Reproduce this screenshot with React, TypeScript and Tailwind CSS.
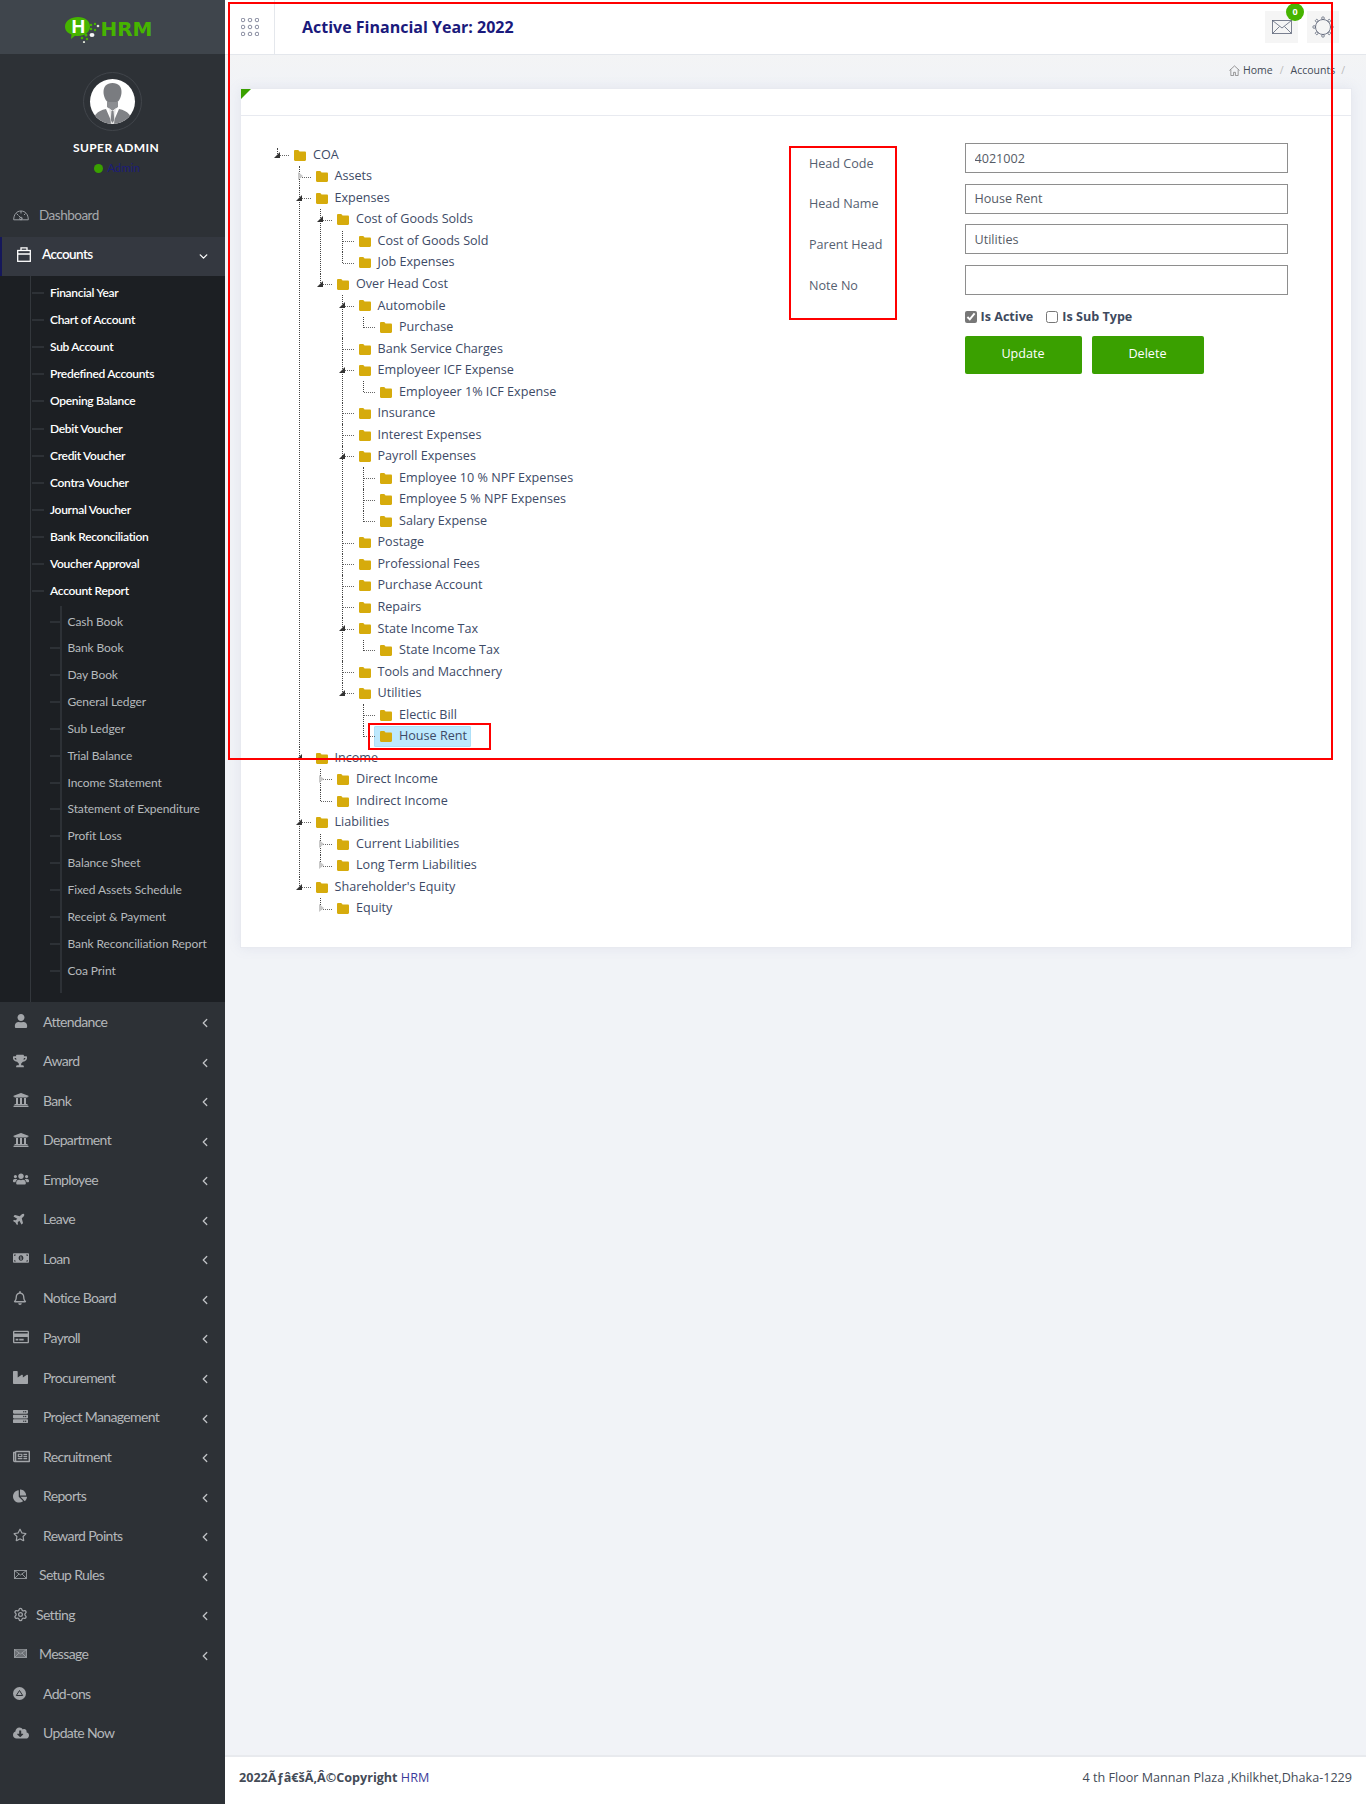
import type { ReactNode } from "react";
import { ChevronDown, ChevronLeft, Settings } from "lucide-react";
import {
  FaUser,
  FaTrophy,
  FaUniversity,
  FaUsers,
  FaPlane,
  FaMoneyBillAlt,
  FaRegBell,
  FaRegCreditCard,
  FaIndustry,
  FaServer,
  FaRegNewspaper,
  FaChartPie,
  FaRegStar,
  FaCloudDownloadAlt,
} from "react-icons/fa";

interface TreeNode {
  label: string;
  mark?: "open" | "closed";
  selected?: boolean;
  children?: TreeNode[];
}

const tree: TreeNode = {
  label: "COA",
  mark: "open",
  children: [
    { label: "Assets", mark: "closed" },
    {
      label: "Expenses",
      mark: "open",
      children: [
        {
          label: "Cost of Goods Solds",
          mark: "open",
          children: [{ label: "Cost of Goods Sold" }, { label: "Job Expenses" }],
        },
        {
          label: "Over Head Cost",
          mark: "open",
          children: [
            { label: "Automobile", mark: "open", children: [{ label: "Purchase" }] },
            { label: "Bank Service Charges" },
            { label: "Employeer ICF Expense", mark: "open", children: [{ label: "Employeer 1% ICF Expense" }] },
            { label: "Insurance" },
            { label: "Interest Expenses" },
            {
              label: "Payroll Expenses",
              mark: "open",
              children: [
                { label: "Employee 10 % NPF Expenses" },
                { label: "Employee 5 % NPF Expenses" },
                { label: "Salary Expense" },
              ],
            },
            { label: "Postage" },
            { label: "Professional Fees" },
            { label: "Purchase Account" },
            { label: "Repairs" },
            { label: "State Income Tax", mark: "open", children: [{ label: "State Income Tax" }] },
            { label: "Tools and Macchnery" },
            {
              label: "Utilities",
              mark: "open",
              children: [{ label: "Electic Bill" }, { label: "House Rent", selected: true }],
            },
          ],
        },
      ],
    },
    {
      label: "Income",
      mark: "open",
      children: [{ label: "Direct Income", mark: "closed" }, { label: "Indirect Income" }],
    },
    {
      label: "Liabilities",
      mark: "open",
      children: [
        { label: "Current Liabilities", mark: "closed" },
        { label: "Long Term Liabilities", mark: "closed" },
      ],
    },
    {
      label: "Shareholder's Equity",
      mark: "open",
      children: [{ label: "Equity", mark: "closed" }],
    },
  ],
};

const accountLinks = [
  "Financial Year",
  "Chart of Account",
  "Sub Account",
  "Predefined Accounts",
  "Opening Balance",
  "Debit Voucher",
  "Credit Voucher",
  "Contra Voucher",
  "Journal Voucher",
  "Bank Reconciliation",
  "Voucher Approval",
  "Account Report",
];

const reportLinks = [
  "Cash Book",
  "Bank Book",
  "Day Book",
  "General Ledger",
  "Sub Ledger",
  "Trial Balance",
  "Income Statement",
  "Statement of Expenditure",
  "Profit Loss",
  "Balance Sheet",
  "Fixed Assets Schedule",
  "Receipt & Payment",
  "Bank Reconciliation Report",
  "Coa Print",
];

function Folder() {
  return (
    <svg viewBox="0 0 12 11" className="h-[11px] w-[12px] shrink-0" fill="#d6ab0c">
      <path d="M0 1.2C0 .5.5 0 1.2 0h2.6c.5 0 .8.2 1.1.6l.6.9h5.3c.7 0 1.2.5 1.2 1.2v7.1c0 .7-.5 1.2-1.2 1.2H1.2C.5 11 0 10.500 0 9.800z" />
    </svg>
  );
}

function TreeRow({ node, last, root }: { node: TreeNode; last: boolean; root?: boolean }) {
  return (
    <li className="relative">
      <span
        className={`absolute left-[3px] border-l border-dotted border-[#444] ${
          root ? "top-[3px] h-[8px]" : last ? "top-0 h-[11px]" : "top-0 bottom-0"
        }`}
      />
      <div className="relative flex h-[21.54px] items-center pl-[20px]">
        <span className="absolute left-[4px] top-[10.500px] w-[11px] border-t border-dotted border-[#666]" />
        {node.mark === "open" && (
          <span className="absolute left-0 top-[7px] h-0 w-0 border-b-[6px] border-l-[6px] border-b-[#333] border-l-transparent" />
        )}
        {node.mark === "closed" && (
          <span className="absolute left-[2px] top-[6px] h-0 w-0 border-y-[4px] border-l-[5px] border-y-transparent border-l-[#c8c8c8]" />
        )}
        <span
          className={`flex h-[21px] items-center gap-[7px] rounded-[1px] whitespace-nowrap ${
            node.selected ? "-ml-[6px] border border-[#aee0f8] bg-[#bee9fd] pl-[5px] pr-[3px]" : ""
          }`}
        >
          <Folder />
          {node.label}
        </span>
      </div>
      {node.children && (
        <ul className="pl-[21.500px]">
          {node.children.map((child, i) => (
            <TreeRow key={child.label + i} node={child} last={i === node.children!.length - 1} />
          ))}
        </ul>
      )}
    </li>
  );
}

function Logo() {
  return (
    <div className="relative flex items-center">
      <svg viewBox="0 0 36 27" className="h-[27px] w-[36px]">
        <path d="M14 1c7 0 12 4 12 9.500S21 20 14 20c-1 0-2 0-3-.200L7 23l.5-4.500C3 17 1 14 1 10.500 1 5 7 1 14 1z" fill="#46b400" />
        <circle cx="27" cy="9" r="1.300" fill="#46b400" />
        <circle cx="31" cy="8" r="1.200" fill="#46b400" />
        <circle cx="34" cy="10" r="1.300" fill="#dfe6d8" />
        <circle cx="27" cy="13" r="1.300" fill="#46b400" />
        <circle cx="31" cy="14" r="1.200" fill="#46b400" />
        <ellipse cx="28" cy="19" rx="2.500" ry="2" fill="#f5f5f5" />
        <circle cx="22" cy="19" r="1.500" fill="#46b400" />
        <circle cx="18" cy="22" r="1.300" fill="#46b400" />
        <circle cx="23" cy="23" r="1.200" fill="#46b400" />
        <circle cx="20" cy="26" r="1.100" fill="#dfe6d8" />
      </svg>
      <span className="absolute left-[7px] top-[0px] font-['Liberation_Sans',sans-serif] text-[19px] font-bold leading-[21px] text-white">
        H
      </span>
      <span className="font-['DejaVu_Sans',sans-serif] text-[20px] font-bold leading-none text-[#46b400]">HRM</span>
    </div>
  );
}

function Avatar() {
  return (
    <div className="flex h-[59px] w-[59px] items-center justify-center rounded-full border border-[#41454b]">
      <svg viewBox="0 0 45 45" className="h-[45px] w-[45px] rounded-full bg-white">
        <path d="M22.500 4c6 0 9 3.500 9 9 0 5-3 12-9 12s-9-7-9-12c0-5.500 3-9 9-9z" fill="#7a7c80" />
        <path d="M17 23h11v5l-5.500 4L17 28z" fill="#8c8e92" />
        <path d="M3 45c0-9 4-13 13-15l6.500 15L29 30c9 2 13 6 13 15z" fill="#808286" />
        <path d="M19 29l3.500 3 3.500-3-2 16h-3z" fill="#e6e6e6" />
        <path d="M21.500 32h2l.8 9-1.800 3-1.800-3z" fill="#808286" />
      </svg>
    </div>
  );
}

function GaugeIcon() {
  return (
    <svg viewBox="0 0 16 11" className="h-[11px] w-[16px]" fill="none" stroke="#9a9ea3" strokeWidth="1">
      <path d="M.7 9.800C.7 4.500 3.600 1 8 1s7.300 3.500 7.300 8.800H.7z" />
      <path d="M8 1v2.500M3.500 3.500l1.500 1.500M12.500 3.500 11 5M8.800 8.800 5.500 5.500" />
      <circle cx="8" cy="8.500" r="1.300" />
    </svg>
  );
}

function BagIcon() {
  return (
    <svg viewBox="0 0 14 15" className="h-[15px] w-[14px]" fill="none" stroke="#fff" strokeWidth="1.300">
      <rect x=".7" y="3.500" width="12.600" height="10.800" />
      <path d="M4 3.500V.8h6v2.700M.7 7h12.600" />
    </svg>
  );
}

function ThinMail({ fill }: { fill?: string }) {
  return (
    <svg viewBox="0 0 13 9" className="ml-[1px] h-[9px] w-[13px]" fill={fill ?? "none"} stroke="#9a9ea3" strokeWidth=".9">
      <rect x=".5" y=".5" width="12" height="8" />
      <path d="m.5.5 6 4.500 6-4.500M.5 8.500 5 4M12.500 8.500 8 4" />
    </svg>
  );
}

function AddonIcon() {
  return (
    <svg viewBox="0 0 13 13" className="h-[13px] w-[13px]">
      <circle cx="6.500" cy="6.500" r="6.500" fill="#a2a5a9" />
      <path d="M6.500 3.500 9.700 8.500H3.300z" fill="none" stroke="#2d3136" strokeWidth="1" />
    </svg>
  );
}

function SideItem({
  icon,
  label,
  textLeft = 43,
  chevron = true,
}: {
  icon: ReactNode;
  label: string;
  textLeft?: 43 | 39 | 36;
  chevron?: boolean;
}) {
  const gap = textLeft === 43 ? "w-[30px]" : textLeft === 39 ? "w-[26px]" : "w-[23px]";
  return (
    <div className="flex h-[39.55px] items-center pb-[2px] pl-[13px] pr-[13px] text-[14px] text-[#b4b7ba]">
      <span className={`flex shrink-0 items-center text-[#a2a5a9] ${gap}`}>{icon}</span>
      <span className="flex-1 tracking-[-0.65px]">{label}</span>
      {chevron && <ChevronLeft size={14} strokeWidth={2.2} className="mt-[4px] text-[#c0c3c6]" />}
    </div>
  );
}

function Sidebar() {
  return (
    <aside className="flex w-[225px] shrink-0 flex-col bg-[#2d3136] font-['Lato',sans-serif]">
      <div className="flex h-[54px] items-center justify-center bg-[#3f454c] pr-[8px] pt-[4px]">
        <Logo />
      </div>
      <div className="flex h-[142px] flex-col items-center pt-[18px]">
        <Avatar />
        <div className="mt-[9px] pl-[7px] text-[12px] font-bold leading-[16px] tracking-[0.4px] text-white">SUPER ADMIN</div>
        <div className="mt-[4px] flex items-center gap-[4px] pl-[9px] text-[11.500px] leading-[16px] text-[#1c1c78]">
          <span className="h-[9px] w-[9px] rounded-full bg-[#3aa000]" />
          Admin
        </div>
      </div>
      <div className="flex h-[41px] items-center pb-[3px] pl-[13px] text-[13.500px] tracking-[-0.5px] text-[#a5a8ac]">
        <span className="w-[26px]">
          <GaugeIcon />
        </span>
        Dashboard
      </div>
      <div className="flex h-[39px] items-center border-l-2 border-[#15175a] bg-[#343840] pb-[4px] pl-[15px] pr-[15px] text-[13.500px] font-semibold tracking-[-0.6px] text-white">
        <span className="w-[25px]">
          <BagIcon />
        </span>
        <span className="flex-1">Accounts</span>
        <ChevronDown size={13} strokeWidth={2.4} className="mt-[4px]" />
      </div>
      <div className="bg-[#1c1f23] pl-[30px]">
        <div className="border-l border-[#33373c] pb-[9px] pt-[3.500px]">
          {accountLinks.map((link) => (
            <div key={link} className="flex h-[27.100px] items-center text-[12px] font-semibold tracking-[-0.3px] text-white">
              <span className="ml-[1px] mr-[6px] w-[12px] border-t-2 border-[#2d3136]" />
              {link}
            </div>
          ))}
          <div className="ml-[29px] mt-[1px] border-l-2 border-[#2d3136] pb-[9.400px] pt-[2.500px]">
            {reportLinks.map((link) => (
              <div key={link} className="-ml-[12px] flex h-[26.850px] items-center text-[12px] tracking-[-0.1px] text-[#b6babd]">
                <span className="mr-[5.500px] w-[12px] border-t-2 border-[#2d3136]" />
                {link}
              </div>
            ))}
          </div>
        </div>
      </div>
      <div>
        <SideItem icon={<FaUser size={14} className="ml-[1px]" />} label="Attendance" />
        <SideItem icon={<FaTrophy size={14} />} label="Award" />
        <SideItem icon={<FaUniversity size={16} />} label="Bank" />
        <SideItem icon={<FaUniversity size={16} />} label="Department" />
        <SideItem icon={<FaUsers size={16} />} label="Employee" />
        <SideItem icon={<FaPlane size={13} className="-rotate-45" />} label="Leave" />
        <SideItem icon={<FaMoneyBillAlt size={16} />} label="Loan" />
        <SideItem icon={<FaRegBell size={14} />} label="Notice Board" />
        <SideItem icon={<FaRegCreditCard size={16} />} label="Payroll" />
        <SideItem icon={<FaIndustry size={15} />} label="Procurement" />
        <SideItem icon={<FaServer size={15} />} label="Project Management" />
        <SideItem icon={<FaRegNewspaper size={17} />} label="Recruitment" />
        <SideItem icon={<FaChartPie size={14} />} label="Reports" />
        <SideItem icon={<FaRegStar size={14} />} label="Reward Points" />
        <SideItem icon={<ThinMail />} label="Setup Rules" textLeft={39} />
        <SideItem icon={<Settings size={15} strokeWidth={2} />} label="Setting" textLeft={36} />
        <SideItem icon={<ThinMail fill="#6c7075" />} label="Message" textLeft={39} />
        <SideItem icon={<AddonIcon />} label="Add-ons" chevron={false} />
        <SideItem icon={<FaCloudDownloadAlt size={16} />} label="Update Now" chevron={false} />
      </div>
    </aside>
  );
}

function GridDots() {
  const dots = [2, 9, 16].flatMap((y) => [2, 9, 16].map((x) => ({ x, y })));
  return (
    <svg viewBox="0 0 18 18" className="h-[18px] w-[18px]" fill="none" stroke="#7b7f95" strokeWidth=".9">
      {dots.map((d) => (
        <circle key={`${d.x}-${d.y}`} cx={d.x} cy={d.y} r="1.800" />
      ))}
    </svg>
  );
}

function GearLine() {
  const bumps = [0, 45, 90, 135, 180, 225, 270, 315];
  return (
    <svg viewBox="0 0 22 22" className="h-[22px] w-[22px]" fill="none" stroke="#5a6275" strokeWidth=".8">
      <circle cx="11" cy="11" r="7.500" />
      {bumps.map((a) => (
        <rect key={a} x="9.800" y="1" width="2.400" height="2.400" rx=".6" transform={`rotate(${a} 11 11)`} />
      ))}
    </svg>
  );
}

function Header() {
  return (
    <header className="flex h-[55px] shrink-0 items-center border-b border-[#e4e7ec] bg-white">
      <div className="flex h-full w-[50px] items-center justify-center border-r border-[#e4e7ec]">
        <GridDots />
      </div>
      <h1 className="ml-[27px] flex-1 text-[16px] font-bold text-[#1a1a7c]">Active Financial Year: 2022</h1>
      <div className="relative mr-[9px] flex h-[32px] w-[33px] items-center justify-center bg-[#f5f5f5]">
        <svg viewBox="0 0 20 14" className="h-[14px] w-[20px]" fill="none" stroke="#5c6478" strokeWidth=".8">
          <rect x=".5" y=".5" width="19" height="13" />
          <path d="m.5.5 9.500 7.500L19.500.5M.5 13.500l7-7M19.500 13.500l-7-7" />
        </svg>
        <span className="absolute -right-[6px] -top-[8px] flex h-[18px] w-[18px] items-center justify-center rounded-full bg-[#46b400] text-[9px] font-bold text-white">
          0
        </span>
      </div>
      <div className="mr-[27px] flex h-[32px] w-[32px] items-center justify-center bg-[#f5f5f5]">
        <GearLine />
      </div>
    </header>
  );
}

function Breadcrumb() {
  return (
    <div className="flex h-[33px] shrink-0 items-center justify-end bg-gradient-to-b from-[#f3f4f5] to-[#f1f3f7] pb-[2px] pr-[16px] text-[10.500px] text-[#444b57]">
      <svg viewBox="0 0 12 12" className="mr-[3px] h-[11px] w-[11px]" fill="none" stroke="#777" strokeWidth=".8">
        <path d="M.5 6 6 1l5.500 5M2 5v6.500h3V8h2v3.500h3V5" />
      </svg>
      <span>Home</span>
      <span className="mx-[7px] text-[#bbb]">/</span>
      <span>Accounts</span>
      <span className="ml-[6px] mr-[5px] text-[#bbb]">/</span>
    </div>
  );
}

function Field({ value }: { value: string }) {
  return (
    <input
      readOnly
      value={value}
      className="h-[30px] w-[323px] border border-[#8e8e8e] bg-white px-[9px] text-[12.600px] text-[#555b66] outline-none"
    />
  );
}

function CoaForm() {
  return (
    <div className="-mt-[1.500px] flex">
      <div className="flex w-[174.500px] flex-col gap-[20.700px] pl-[19px] pt-[10.500px] text-[12.600px] leading-[20px] text-[#556070]">
        <div>Head Code</div>
        <div>Head Name</div>
        <div>Parent Head</div>
        <div>Note No</div>
      </div>
      <div className="flex flex-col gap-[10.500px]">
        <Field value="4021002" />
        <Field value="House Rent" />
        <Field value="Utilities" />
        <Field value="" />
        <div className="mt-[2px] flex items-center text-[12.600px] font-bold leading-[20px] text-[#3e4a5e]">
          <input type="checkbox" checked readOnly className="mr-[4px] h-[12px] w-[12px] accent-[#777]" />
          Is Active
          <input type="checkbox" readOnly className="ml-[13px] mr-[4px] h-[12px] w-[12px]" />
          Is Sub Type
        </div>
        <div className="-mt-[2px] flex gap-[10px]">
          <button className="h-[38px] w-[117px] rounded-[2px] bg-[#3aa000] text-[12.600px] text-white">Update</button>
          <button className="h-[38px] w-[112px] rounded-[2px] bg-[#3aa000] text-[12.600px] text-white">Delete</button>
        </div>
      </div>
    </div>
  );
}

function Overlays() {
  return (
    <>
      <div className="pointer-events-none absolute left-[228px] top-[2px] h-[758px] w-[1105px] border-2 border-[#ff0000]" />
      <div className="pointer-events-none absolute left-[789px] top-[146px] h-[174px] w-[108px] border-2 border-[#ff0000]" />
      <div className="pointer-events-none absolute left-[368px] top-[723px] h-[27px] w-[123px] border-2 border-[#ff0000]" />
    </>
  );
}

export default function App() {
  return (
    <div className="relative flex min-h-[1804px] bg-[#f1f3f7] font-['Open_Sans',sans-serif]">
      <Sidebar />
      <main className="flex min-w-0 flex-1 flex-col">
        <Header />
        <Breadcrumb />
        <section className="relative ml-[15px] mr-[14px] h-[860px] border border-[#e8eaf0] bg-white shadow-[0_0_12px_rgba(120,130,170,0.12)]">
          <span className="absolute left-0 top-0 h-0 w-0 border-r-[10px] border-t-[10px] border-r-transparent border-t-[#3aa000]" />
          <div className="h-[27px] border-b border-[#e8eaf0]" />
          <div className="flex pt-[28.500px]">
            <ul className="w-[549px] pl-[33px] text-[12.600px] text-[#3d4a66]">
              <TreeRow node={tree} last root />
            </ul>
            <CoaForm />
          </div>
        </section>
        <div className="flex-1" />
        <footer className="flex h-[49px] items-center justify-between border-t-2 border-[#e8eaee] bg-white pb-[4px] pl-[14px] pr-[14px] text-[12.600px] text-[#444b57]">
          <div className="font-bold">
            2022Ãƒâ€šÃ‚Â©Copyright <span className="font-normal text-[#3b3b9a]">HRM</span>
          </div>
          <div>4 th Floor Mannan Plaza ,Khilkhet,Dhaka-1229</div>
        </footer>
      </main>
      <Overlays />
    </div>
  );
}
